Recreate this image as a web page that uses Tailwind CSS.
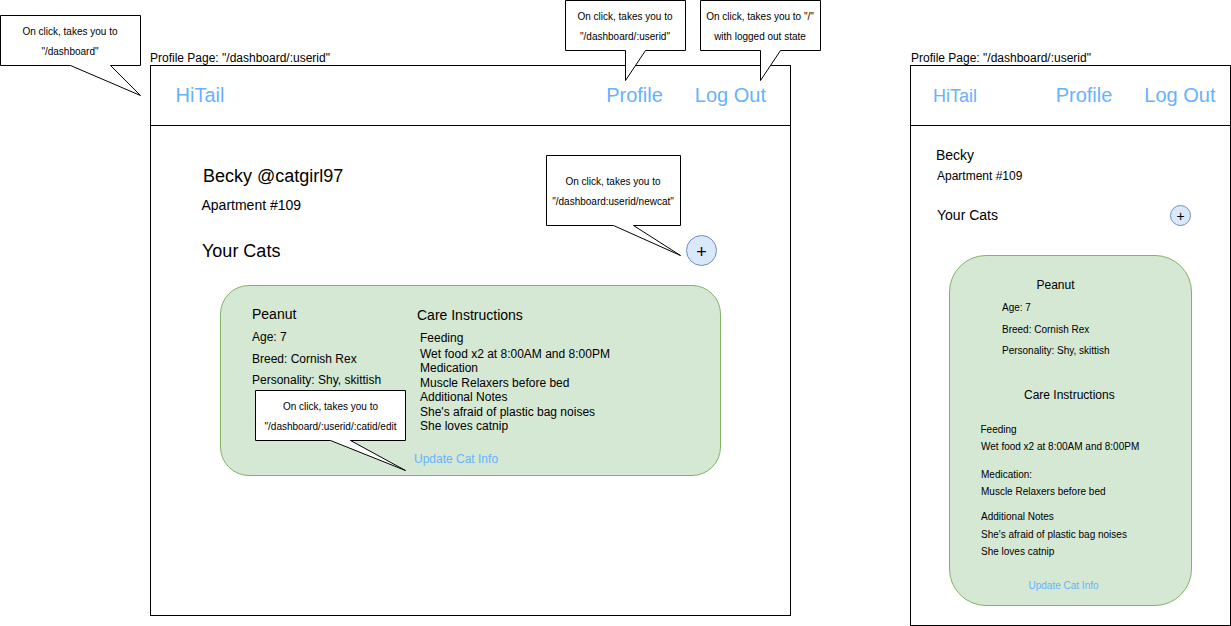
<!DOCTYPE html>
<html lang="en">
<head>
<meta charset="utf-8">
<title>HiTail – Profile page wireframes</title>
<script src="https://cdn.jsdelivr.net/npm/@tailwindcss/browser@4"></script>
</head>
<body class="relative h-[626px] w-[1231px] overflow-hidden bg-white font-['Liberation_Sans',Arial,sans-serif] text-xs text-black">

<main class="flex items-start pl-[150px] pt-[50px]">
  <!-- Desktop wireframe -->
  <section class="w-[641px] shrink-0">
    <h2 class="h-[15px] whitespace-nowrap text-xs leading-[17px]">Profile Page: "/dashboard/:userid"</h2>
    <div class="h-[551px] border border-black">
      <nav class="flex h-[60px] items-center border-b border-black pb-px pl-[24.5px] pr-6 text-xl leading-5 text-[#66b2ff]">
        <a>HiTail</a>
        <a class="ml-auto">Profile</a>
        <a class="ml-8">Log Out</a>
      </nav>
      <header class="pl-[51px] pt-10">
        <h1 class="pl-px text-lg leading-5">Becky @catgirl97</h1>
        <p class="-ml-[0.5px] mt-[9px] text-sm leading-5">Apartment #109</p>
      </header>
      <div class="mt-5 flex h-[31px] items-center justify-between pl-[51px] pr-[73px]">
        <h2 class="text-lg leading-5">Your Cats</h2>
        <button class="flex size-[31px] items-center justify-center rounded-full border border-[#6c8ebf] bg-[#dae8fc] pt-0.5 text-lg leading-5">+</button>
      </div>
      <article class="ml-[69px] mt-[19px] flex h-[191px] w-[501px] rounded-[29px] border border-[#82b366] bg-[#d5e8d4] pl-[31px] pt-[18px]">
        <div class="w-[165px] shrink-0">
          <h3 class="text-sm leading-5">Peanut</h3>
          <p class="mt-[5px] leading-4">Age: 7</p>
          <p class="mt-1.5 leading-4">Breed: Cornish Rex</p>
          <p class="mt-[5px] whitespace-nowrap leading-4">Personality: Shy, skittish</p>
        </div>
        <div class="pt-px">
          <h3 class="text-sm leading-5">Care Instructions</h3>
          <div class="pl-[3px] pt-1.5 leading-[14.4px]">
            <p class="mb-[1.6px]">Feeding</p>
            <p>Wet food x2 at 8:00AM and 8:00PM</p>
            <p>Medication</p>
            <p>Muscle Relaxers before bed</p>
            <p>Additional Notes</p>
            <p>She's afraid of plastic bag noises</p>
            <p>She loves catnip</p>
          </div>
          <a class="-ml-[3px] mt-[18px] block leading-4 text-[#66b2ff]">Update Cat Info</a>
        </div>
      </article>
    </div>
  </section>

  <!-- Mobile wireframe -->
  <section class="ml-[119px] w-[321px] shrink-0">
    <h2 class="h-[15px] whitespace-nowrap pl-px text-xs leading-[17px]">Profile Page: "/dashboard/:userid"</h2>
    <div class="h-[561px] border border-black">
      <nav class="flex h-[60px] items-center border-b border-black pb-px pl-[22px] pr-[14.5px] text-xl leading-5 text-[#66b2ff]">
        <a class="pt-0.5 text-lg leading-5">HiTail</a>
        <a class="ml-auto">Profile</a>
        <a class="ml-8">Log Out</a>
      </nav>
      <header class="pl-[25px] pt-[19px]">
        <h1 class="text-sm leading-5">Becky</h1>
        <p class="ml-px mt-[3px] leading-4">Apartment #109</p>
      </header>
      <div class="mt-[21px] flex h-[21px] items-center justify-between pl-[26px] pr-[39px]">
        <h2 class="pb-0.5 text-sm leading-5">Your Cats</h2>
        <button class="flex size-[21px] items-center justify-center rounded-full border border-[#6c8ebf] bg-[#dae8fc] text-sm leading-4">+</button>
      </div>
      <article class="ml-[38px] mt-[29px] h-[351px] w-[243px] rounded-[37px] border border-[#82b366] bg-[#d5e8d4] pt-[21px] text-[10px] leading-3">
        <h3 class="pl-[86.5px] text-xs leading-4">Peanut</h3>
        <div class="flex flex-col pl-[52px] pt-[9px]">
          <p>Age: 7</p>
          <p class="mt-2.5">Breed: Cornish Rex</p>
          <p class="mt-[9px]">Personality: Shy, skittish</p>
        </div>
        <h3 class="mt-[30px] pl-[74px] text-xs leading-4">Care Instructions</h3>
        <div class="flex flex-col pl-[31px] pt-[21px]">
          <p class="-ml-[0.5px]">Feeding</p>
          <p class="mt-[5px]">Wet food x2 at 8:00AM and 8:00PM</p>
          <p class="mt-4">Medication:</p>
          <p class="mt-[5px]">Muscle Relaxers before bed</p>
          <p class="mt-[13px]">Additional Notes</p>
          <p class="mt-1.5">She's afraid of plastic bag noises</p>
          <p class="mt-[5px]">She loves catnip</p>
        </div>
        <a class="mt-[22px] block pl-[78.5px] text-[#66b2ff]">Update Cat Info</a>
      </article>
    </div>
  </section>
</main>

<!-- Callouts pinned over the wireframes -->
<aside class="absolute left-0 top-[15px] w-[141px] text-center text-[10px] leading-5">
  <svg class="absolute left-0 top-0 overflow-visible" width="141" height="82" fill="#fff" stroke="#000" stroke-miterlimit="10"><path d="M.5.5h140v50h-30l30 30-70-30H.5z"/></svg>
  <p class="relative pr-px pt-[7px]">On click, takes you to<br>"/dashboard"</p>
</aside>
<aside class="absolute left-[565px] top-0 w-[121px] text-center text-[10px] leading-5">
  <svg class="absolute left-0 top-0 overflow-visible" width="121" height="82" fill="#fff" stroke="#000" stroke-miterlimit="10"><path d="M.5.5h120v50h-40l-20 30v-30H.5z"/></svg>
  <p class="relative pr-px pt-[7px]">On click, takes you to<br>"/dashboard/:userid"</p>
</aside>
<aside class="absolute left-[700px] top-0 w-[121px] text-center text-[10px] leading-5">
  <svg class="absolute left-0 top-0 overflow-visible" width="121" height="82" fill="#fff" stroke="#000" stroke-miterlimit="10"><path d="M.5.5h120v50h-40l-20 30v-30H.5z"/></svg>
  <p class="relative whitespace-nowrap pr-px pt-[7px]">On click, takes you to "/"<br>with logged out state</p>
</aside>
<aside class="absolute left-[546px] top-[155px] w-[135px] text-center text-[10px] leading-5">
  <svg class="absolute left-0 top-0 overflow-visible" width="135" height="102" fill="#fff" stroke="#000" stroke-miterlimit="10"><path d="M.5.5h134v70h-47l47 30-67-30H.5z"/></svg>
  <p class="relative whitespace-nowrap pr-px pt-[17px]">On click, takes you to<br>"/dashboard:userid/newcat"</p>
</aside>
<aside class="absolute left-[255px] top-[390px] w-[151px] text-center text-[10px] leading-5">
  <svg class="absolute left-0 top-0 overflow-visible" width="151" height="82" fill="#fff" stroke="#000" stroke-miterlimit="10"><path d="M.5.5h150v50h-55l55 30-75-30H.5z"/></svg>
  <p class="relative whitespace-nowrap pt-[7px]">On click, takes you to<br>"/dashboard/:userid/:catid/edit</p>
</aside>
</body>
</html>
